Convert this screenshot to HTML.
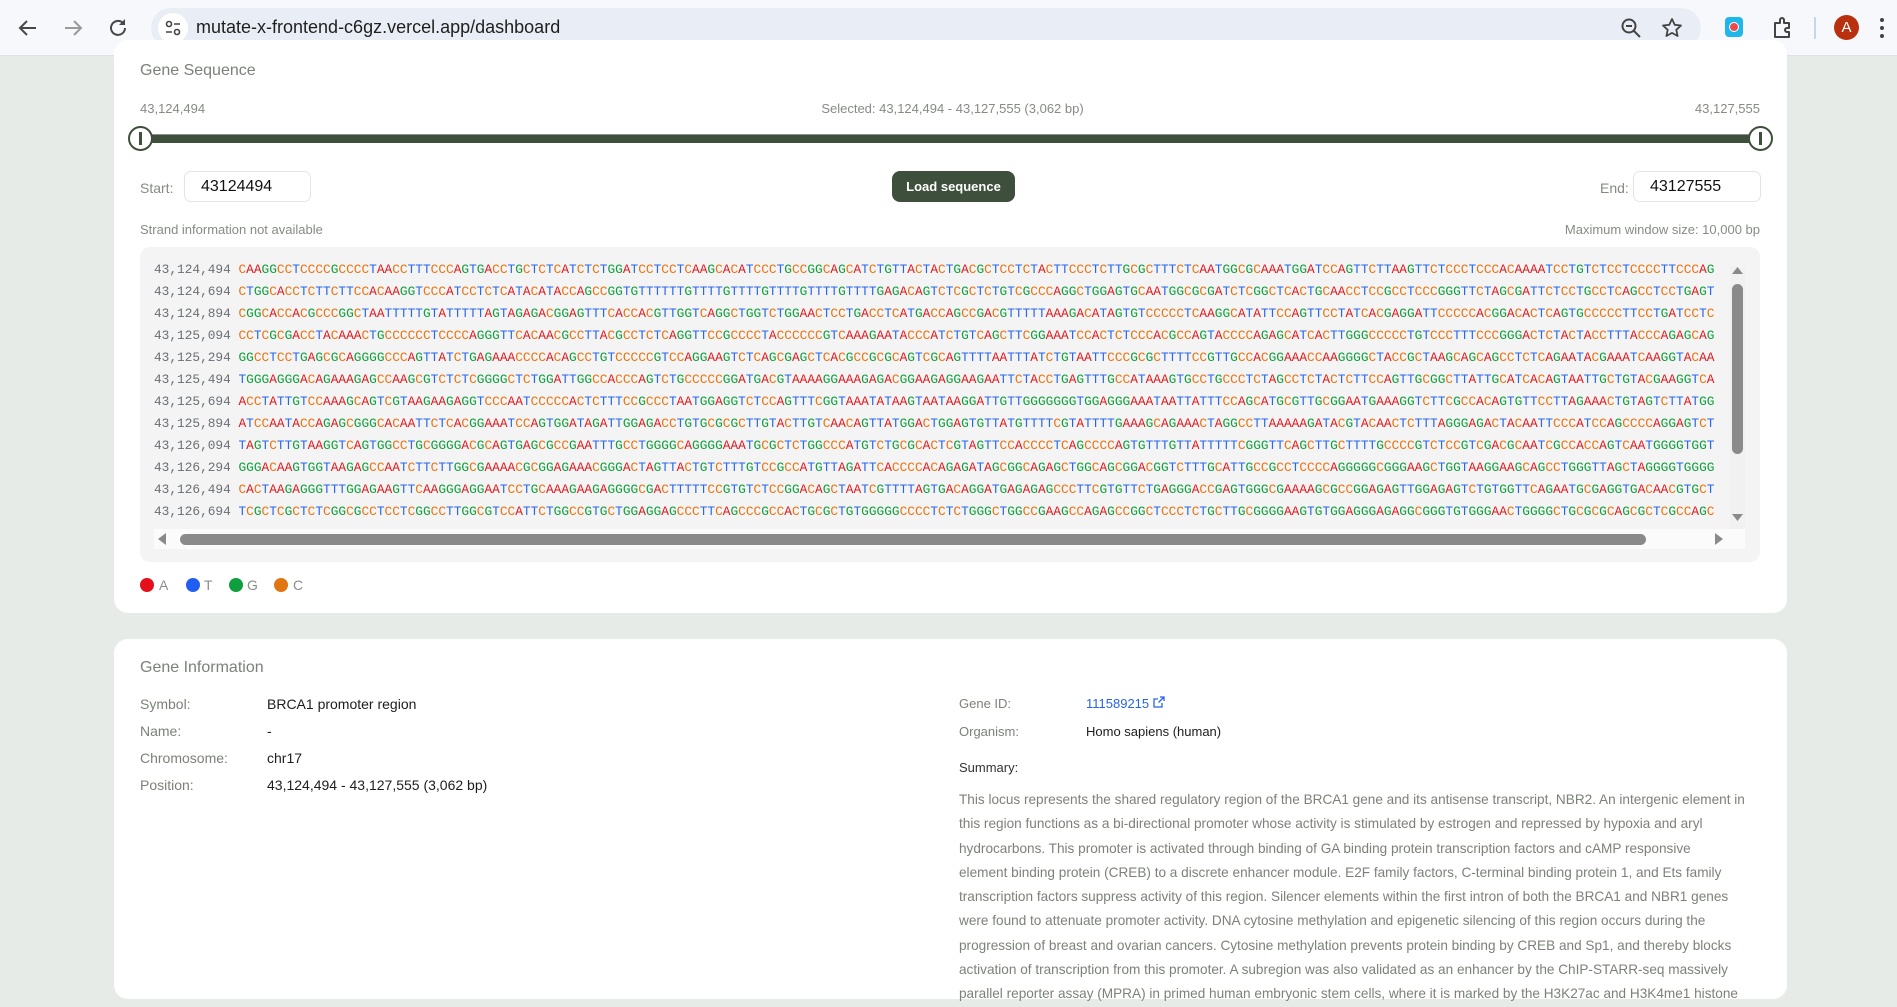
<!DOCTYPE html>
<html><head><meta charset="utf-8">
<style>
*{margin:0;padding:0;box-sizing:border-box}
body{width:1897px;height:969px;overflow:hidden;background:#e7ebe7;font-family:"Liberation Sans",sans-serif;position:relative}
.abs{position:absolute}
.chrome{left:0;top:0;width:1897px;height:56px;background:#f7f8fc;border-bottom:1px solid #dde1ea}
.pill{left:151px;top:8px;width:1550px;height:40px;border-radius:20px;background:#e9edf5}
.url{left:196px;top:17px;font-size:18px;color:#1f1f1f}
.card{background:#fff;border-radius:14px;left:114px;width:1673px}
.g{color:#7a8279}
.lbl{font-size:13px;color:#858c84}
.inp{background:#fff;border:1px solid #e2e5e2;border-radius:7px;height:31px;font-size:16px;color:#111;padding:6px 0 0 16px}
.seq{left:140px;top:247px;width:1620px;height:315px;background:#f3f4f3;border-radius:10px;overflow:hidden}
.rows{position:absolute;left:14px;top:12px;width:1576px;overflow:hidden;font-family:"Liberation Mono",monospace;font-size:12.8px;line-height:22px;white-space:nowrap}
.rows .n{color:#6b6f75}
.A{color:#e5161d}.T{color:#2866ec}.G{color:#0f9f3e}.C{color:#ea7412}
.dot{width:14px;height:14px;border-radius:50%;top:578px}
.leg{top:577px;font-size:14px;color:#8a8f8a}
.il{font-size:14px;color:#7b8279}
.iv{font-size:14px;color:#1d1d1d}
</style></head><body>
<div class="abs chrome"></div>
<svg class="abs" style="left:16px;top:16px" width="24" height="24" viewBox="0 0 24 24"><path d="M20 12H5M11 5l-7 7 7 7" fill="none" stroke="#474747" stroke-width="2"/></svg>
<svg class="abs" style="left:61px;top:16px" width="24" height="24" viewBox="0 0 24 24"><path d="M4 12h15M13 5l7 7-7 7" fill="none" stroke="#9a9a9a" stroke-width="2"/></svg>
<svg class="abs" style="left:106px;top:16px" width="24" height="24" viewBox="0 0 24 24"><path d="M19 12a7 7 0 1 1-2-5" fill="none" stroke="#474747" stroke-width="2"/><path d="M19 3v6h-6" fill="#474747" stroke="none"/></svg>
<div class="abs pill"></div>
<div class="abs" style="left:158px;top:13px;width:30px;height:30px;border-radius:50%;background:#fff"></div>
<svg class="abs" style="left:164px;top:19px" width="18" height="18" viewBox="0 0 18 18"><circle cx="5" cy="5" r="2.5" fill="none" stroke="#444" stroke-width="1.6"/><path d="M10 5h6M2 13h6" stroke="#444" stroke-width="1.6"/><circle cx="13" cy="13" r="2.5" fill="none" stroke="#444" stroke-width="1.6"/></svg>
<div class="abs url">mutate-x-frontend-c6gz.vercel.app/dashboard</div>
<svg class="abs" style="left:1620px;top:17px" width="22" height="22" viewBox="0 0 22 22"><circle cx="9" cy="9" r="6.5" fill="none" stroke="#444" stroke-width="2"/><path d="M14 14l6 6M6 9h6" stroke="#444" stroke-width="2"/></svg>
<svg class="abs" style="left:1660px;top:16px" width="24" height="24" viewBox="0 0 24 24"><path d="M12 3l2.7 5.8 6.3.7-4.7 4.3 1.3 6.2L12 16.9 6.4 20l1.3-6.2L3 9.5l6.3-.7z" fill="none" stroke="#444" stroke-width="1.8" stroke-linejoin="round"/></svg>
<div class="abs" style="left:1725px;top:17px;width:18px;height:20px;border-radius:4px;background:#1fb7ea"></div>
<div class="abs" style="left:1729px;top:22px;width:10px;height:10px;border-radius:50%;background:#f04a4a;border:1px solid #fff"></div>
<svg class="abs" style="left:1771px;top:16px" width="24" height="24" viewBox="0 0 24 24"><path d="M4 7h5V4a2 2 0 0 1 4 0v3h5v5h-2a2 2 0 0 0 0 4h2v5H4z" fill="none" stroke="#444" stroke-width="2" stroke-linejoin="round"/></svg>
<div class="abs" style="left:1814px;top:17px;width:2px;height:22px;background:#c9d5ec"></div>
<div class="abs" style="left:1834px;top:15px;width:25px;height:25px;border-radius:50%;background:#b8300e;color:#fff;font-size:15px;text-align:center;line-height:25px">A</div>
<div class="abs" style="left:1880px;top:18px;width:4px;height:4px;border-radius:2px;background:#444;box-shadow:0 8px 0 #444,0 16px 0 #444"></div>

<div class="abs card" style="top:40px;height:573px"></div>
<div class="abs g" style="left:140px;top:62px;font-size:16px">Gene Sequence</div>
<div class="abs lbl" style="left:140px;top:101px">43,124,494</div>
<div class="abs lbl" style="left:0;width:1897px;text-align:center;top:101px;padding-left:8px">Selected: 43,124,494 - 43,127,555 (3,062 bp)</div>
<div class="abs lbl" style="left:1560px;width:200px;text-align:right;top:101px">43,127,555</div>
<div class="abs" style="left:140px;top:134px;width:1620px;height:9px;background:#3e4f3c;border-top:1px solid #8a968a"></div>
<div class="abs" style="left:128px;top:126px;width:25px;height:25px;border-radius:50%;background:#fff;border:2.5px solid #3e4f3c"></div>
<div class="abs" style="left:139px;top:132px;width:3px;height:13px;background:#3e4f3c"></div>
<div class="abs" style="left:1748px;top:126px;width:25px;height:25px;border-radius:50%;background:#fff;border:2.5px solid #3e4f3c"></div>
<div class="abs" style="left:1759px;top:132px;width:3px;height:13px;background:#3e4f3c"></div>

<div class="abs lbl" style="left:140px;top:180px;font-size:14px">Start:</div>
<div class="abs inp" style="left:184px;top:171px;width:127px">43124494</div>
<div class="abs" style="left:892px;top:171px;width:123px;height:31px;border-radius:8px;background:#3e4f3c;color:#fff;font-size:13px;font-weight:bold;text-align:center;line-height:31px">Load sequence</div>
<div class="abs lbl" style="left:1600px;top:180px;font-size:14px">End:</div>
<div class="abs inp" style="left:1633px;top:171px;width:128px">43127555</div>
<div class="abs lbl" style="left:140px;top:222px">Strand information not available</div>
<div class="abs lbl" style="left:1460px;width:300px;text-align:right;top:222px">Maximum window size: 10,000 bp</div>

<div class="abs seq"><div class="rows" id="rows">
<div><span class="n">43,124,494 </span><span class="s">CAAGGCCTCCCCGCCCCTAACCTTTCCCAGTGACCTGCTCTCATCTCTGGATCCTCCTCAAGCACATCCCTGCCGGCAGCATCTGTTACTACTGACGCTCCTCTACTTCCCTCTTGCGCTTTCTCAATGGCGCAAATGGATCCAGTTCTTAAGTTCTCCCTCCCACAAAATCCTGTCTCCTCCCCTTCCCAG</span></div>
<div><span class="n">43,124,694 </span><span class="s">CTGGCACCTCTTCTTCCACAAGGTCCCATCCTCTCATACATACCAGCCGGTGTTTTTTGTTTTGTTTTGTTTTGTTTTGTTTTGAGACAGTCTCGCTCTGTCGCCCAGGCTGGAGTGCAATGGCGCGATCTCGGCTCACTGCAACCTCCGCCTCCCGGGTTCTAGCGATTCTCCTGCCTCAGCCTCCTGAGT</span></div>
<div><span class="n">43,124,894 </span><span class="s">CGGCACCACGCCCGGCTAATTTTTGTATTTTTAGTAGAGACGGAGTTTCACCACGTTGGTCAGGCTGGTCTGGAACTCCTGACCTCATGACCAGCCGACGTTTTTAAAGACATAGTGTCCCCCTCAAGGCATATTCCAGTTCCTATCACGAGGATTCCCCCACGGACACTCAGTGCCCCCTTCCTGATCCTC</span></div>
<div><span class="n">43,125,094 </span><span class="s">CCTCGCGACCTACAAACTGCCCCCCTCCCCAGGGTTCACAACGCCTTACGCCTCTCAGGTTCCGCCCCTACCCCCCGTCAAAGAATACCCATCTGTCAGCTTCGGAAATCCACTCTCCCACGCCAGTACCCCAGAGCATCACTTGGGCCCCCTGTCCCTTTCCCGGGACTCTACTACCTTTACCCAGAGCAG</span></div>
<div><span class="n">43,125,294 </span><span class="s">GGCCTCCTGAGCGCAGGGGCCCAGTTATCTGAGAAACCCCACAGCCTGTCCCCCGTCCAGGAAGTCTCAGCGAGCTCACGCCGCGCAGTCGCAGTTTTAATTTATCTGTAATTCCCGCGCTTTTCCGTTGCCACGGAAACCAAGGGGCTACCGCTAAGCAGCAGCCTCTCAGAATACGAAATCAAGGTACAA</span></div>
<div><span class="n">43,125,494 </span><span class="s">TGGGAGGGACAGAAAGAGCCAAGCGTCTCTCGGGGCTCTGGATTGGCCACCCAGTCTGCCCCCGGATGACGTAAAAGGAAAGAGACGGAAGAGGAAGAATTCTACCTGAGTTTGCCATAAAGTGCCTGCCCTCTAGCCTCTACTCTTCCAGTTGCGGCTTATTGCATCACAGTAATTGCTGTACGAAGGTCA</span></div>
<div><span class="n">43,125,694 </span><span class="s">ACCTATTGTCCAAAGCAGTCGTAAGAAGAGGTCCCAATCCCCCACTCTTTCCGCCCTAATGGAGGTCTCCAGTTTCGGTAAATATAAGTAATAAGGATTGTTGGGGGGGTGGAGGGAAATAATTATTTCCAGCATGCGTTGCGGAATGAAAGGTCTTCGCCACAGTGTTCCTTAGAAACTGTAGTCTTATGG</span></div>
<div><span class="n">43,125,894 </span><span class="s">ATCCAATACCAGAGCGGGCACAATTCTCACGGAAATCCAGTGGATAGATTGGAGACCTGTGCGCGCTTGTACTTGTCAACAGTTATGGACTGGAGTGTTATGTTTTCGTATTTTGAAAGCAGAAACTAGGCCTTAAAAAGATACGTACAACTCTTTAGGGAGACTACAATTCCCATCCAGCCCCAGGAGTCT</span></div>
<div><span class="n">43,126,094 </span><span class="s">TAGTCTTGTAAGGTCAGTGGCCTGCGGGGACGCAGTGAGCGCCGAATTTGCCTGGGGCAGGGGAAATGCGCTCTGGCCCATGTCTGCGCACTCGTAGTTCCACCCCTCAGCCCCAGTGTTTGTTATTTTTCGGGTTCAGCTTGCTTTTGCCCCGTCTCCGTCGACGCAATCGCCACCAGTCAATGGGGTGGT</span></div>
<div><span class="n">43,126,294 </span><span class="s">GGGACAAGTGGTAAGAGCCAATCTTCTTGGCGAAAACGCGGAGAAACGGGACTAGTTACTGTCTTTGTCCGCCATGTTAGATTCACCCCACAGAGATAGCGGCAGAGCTGGCAGCGGACGGTCTTTGCATTGCCGCCTCCCCAGGGGGCGGGAAGCTGGTAAGGAAGCAGCCTGGGTTAGCTAGGGGTGGGG</span></div>
<div><span class="n">43,126,494 </span><span class="s">CACTAAGAGGGTTTGGAGAAGTTCAAGGGAGGAATCCTGCAAAGAAGAGGGGCGACTTTTTCCGTGTCTCCGGACAGCTAATCGTTTTAGTGACAGGATGAGAGAGCCCTTCGTGTTCTGAGGGACCGAGTGGGCGAAAAGCGCCGGAGAGTTGGAGAGTCTGTGGTTCAGAATGCGAGGTGACAACGTGCT</span></div>
<div><span class="n">43,126,694 </span><span class="s">TCGCTCGCTCTCGGCGCCTCCTCGGCCTTGGCGTCCATTCTGGCCGTGCTGGAGGAGCCCTTCAGCCCGCCACTGCGCTGTGGGGGCCCCTCTCTGGGCTGGCCGAAGCCAGAGCCGGCTCCCTCTGCTTGCGGGGAAGTGTGGAGGGAGAGGCGGGTGTGGGAACTGGGGCTGCGCGCAGCGCTCGCCAGC</span></div>
</div>
<div class="abs" style="left:1590px;top:20px;width:15px;height:270px;background:#f1f1f1"></div>
<svg class="abs" style="left:1591px;top:18px" width="13" height="10"><path d="M1 9L6.5 2 12 9z" fill="#8a8a8a"/></svg>
<div class="abs" style="left:1592px;top:37px;width:11px;height:170px;border-radius:6px;background:#8a8a8a"></div>
<svg class="abs" style="left:1591px;top:266px" width="13" height="10"><path d="M1 1h11L6.5 8z" fill="#8a8a8a"/></svg>
<div class="abs" style="left:14px;top:282px;width:1591px;height:20px;background:#fbfbfb"></div>
<svg class="abs" style="left:16px;top:285px" width="12" height="14"><path d="M10 1v12L2 7z" fill="#8a8a8a"/></svg>
<div class="abs" style="left:40px;top:287px;width:1466px;height:11px;border-radius:6px;background:#8a8a8a"></div>
<svg class="abs" style="left:1573px;top:285px" width="12" height="14"><path d="M2 1v12l8-6z" fill="#8a8a8a"/></svg>
</div>

<div class="abs dot" style="left:140px;background:#e5101b"></div><div class="abs leg" style="left:159px">A</div>
<div class="abs dot" style="left:186px;background:#1f5ef0"></div><div class="abs leg" style="left:204px">T</div>
<div class="abs dot" style="left:229px;background:#0f9f3e"></div><div class="abs leg" style="left:247px">G</div>
<div class="abs dot" style="left:274px;background:#e07512"></div><div class="abs leg" style="left:293px">C</div>

<div class="abs card" style="top:639px;height:360px"></div>
<div class="abs g" style="left:140px;top:659px;font-size:16px">Gene Information</div>
<div class="abs il" style="left:140px;top:696px">Symbol:</div><div class="abs iv" style="left:267px;top:696px">BRCA1 promoter region</div>
<div class="abs il" style="left:140px;top:723px">Name:</div><div class="abs iv" style="left:267px;top:723px">-</div>
<div class="abs il" style="left:140px;top:750px">Chromosome:</div><div class="abs iv" style="left:267px;top:750px">chr17</div>
<div class="abs il" style="left:140px;top:777px">Position:</div><div class="abs iv" style="left:267px;top:777px">43,124,494 - 43,127,555 (3,062 bp)</div>
<div class="abs il" style="left:959px;top:696px;font-size:13px">Gene ID:</div><div class="abs" style="left:1086px;top:696px;font-size:13px;color:#2563eb">111589215 <svg width="12" height="12" viewBox="0 0 12 12"><path d="M7 1h4v4M11 1L5.5 6.5M9 7v4H1V3h4" fill="none" stroke="#2563eb" stroke-width="1.3"/></svg></div>
<div class="abs il" style="left:959px;top:724px;font-size:13px">Organism:</div><div class="abs iv" style="left:1086px;top:724px;font-size:13px">Homo sapiens (human)</div>
<div class="abs" style="left:959px;top:760px;font-size:13px;color:#333">Summary:</div>
<div class="abs" style="left:959px;top:788px;width:802px;font-size:13.6px;line-height:24.3px;color:#7b8279;white-space:nowrap">This locus represents the shared regulatory region of the BRCA1 gene and its antisense transcript, NBR2. An intergenic element in<br>this region functions as a bi-directional promoter whose activity is stimulated by estrogen and repressed by hypoxia and aryl<br>hydrocarbons. This promoter is activated through binding of GA binding protein transcription factors and cAMP responsive<br>element binding protein (CREB) to a discrete enhancer module. E2F family factors, C-terminal binding protein 1, and Ets family<br>transcription factors suppress activity of this region. Silencer elements within the first intron of both the BRCA1 and NBR1 genes<br>were found to attenuate promoter activity. DNA cytosine methylation and epigenetic silencing of this region occurs during the<br>progression of breast and ovarian cancers. Cytosine methylation prevents protein binding by CREB and Sp1, and thereby blocks<br>activation of transcription from this promoter. A subregion was also validated as an enhancer by the ChIP-STARR-seq massively<br>parallel reporter assay (MPRA) in primed human embryonic stem cells, where it is marked by the H3K27ac and H3K4me1 histone</div>
<script>
document.querySelectorAll('.s').forEach(function(e){var t=e.textContent,h='';for(var i=0;i<t.length;i++){h+='<span class="'+t[i]+'">'+t[i]+'</span>';}e.innerHTML=h;});
</script>
</body></html>
